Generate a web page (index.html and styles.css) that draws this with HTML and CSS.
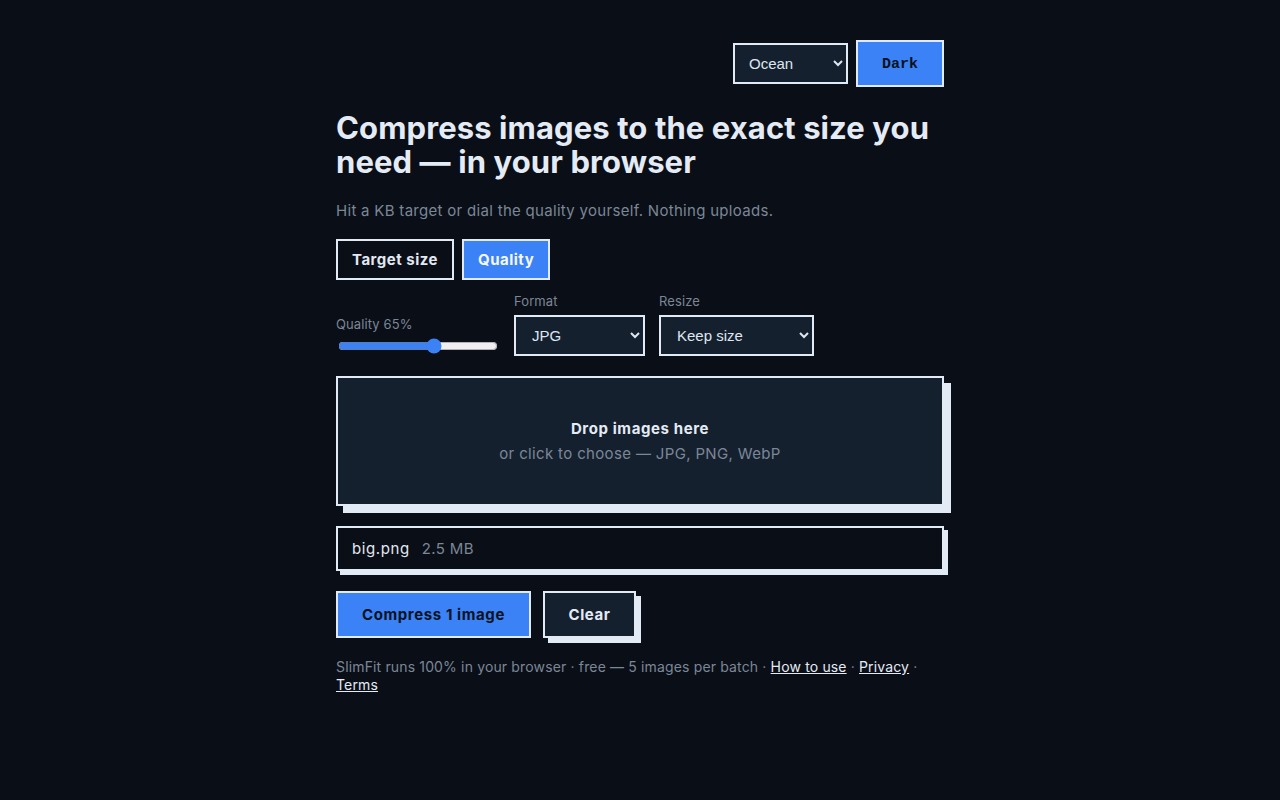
FILE: index.html
```html
<!DOCTYPE html>
<html lang="en">
<head>
    <meta charset="UTF-8">
    <meta name="viewport" content="width=device-width, initial-scale=1.0">
    <title>SlimFit — Compress images</title>
    <link rel="stylesheet" href="styles.css">
</head>
<body>
    <main class="wrap">
        <!-- Theme controls -->
        <div class="topbar">
            <select class="theme-select">
                <option>Ocean</option>
                <option>Forest</option>
                <option>Sunset</option>
            </select>
            <button class="theme-toggle" type="button">Dark</button>
        </div>

        <h1>Compress images to the exact size you need — in your browser</h1>
        <p class="lead">Hit a KB target or dial the quality yourself. Nothing uploads.</p>

        <div class="modes">
            <button class="mode" type="button">Target size</button>
            <button class="mode active" type="button">Quality</button>
        </div>

        <div class="controls">
            <div class="field">
                <label for="quality">Quality 65%</label>
                <input type="range" id="quality" min="10" max="100" value="65">
            </div>
            <div class="field">
                <label for="format">Format</label>
                <select id="format" class="pick format">
                    <option>JPG</option>
                    <option>PNG</option>
                    <option>WebP</option>
                </select>
            </div>
            <div class="field">
                <label for="resize">Resize</label>
                <select id="resize" class="pick resize">
                    <option>Keep size</option>
                    <option>Max 1920px</option>
                    <option>Max 1280px</option>
                </select>
            </div>
        </div>

        <div class="dropzone">
            <strong>Drop images here</strong>
            <span>or click to choose — JPG, PNG, WebP</span>
        </div>

        <div class="file-row">
            <span class="file-name">big.png</span>
            <span class="file-size">2.5 MB</span>
        </div>

        <div class="actions">
            <button class="btn primary" type="button">Compress 1 image</button>
            <button class="btn secondary" type="button">Clear</button>
        </div>

        <p class="footer">SlimFit runs 100% in your browser · free — 5 images per batch · <a href="#">How to use</a> · <a href="#">Privacy</a> · <a href="#">Terms</a></p>
    </main>
</body>
</html>
```

FILE: styles.css
```css
body {
    margin: 0;
    background-color: #0a0e16;
    color: #e2e9f3;
    font-family: Inter, "Noto Sans", sans-serif;
    letter-spacing: 0.35px;
}
.wrap {
    width: 608px;
    margin: 0 auto;
    padding-top: 40px;
}
.topbar {
    display: flex;
    justify-content: flex-end;
    align-items: center;
    gap: 8px;
}
.theme-select {
    width: 115px;
    height: 41px;
    padding: 0 10px;
    background-color: #15202e;
    color: #dfe6f0;
    border: 2px solid #e2eaf5;
    border-radius: 0;
    font-size: 15px;
}
.theme-toggle {
    width: 88px;
    height: 47px;
    padding-top: 2px;
    background-color: #3b82f6;
    color: #0b1220;
    border: 2px solid #e2eaf5;
    font-family: "Liberation Mono", monospace;
    font-weight: bold;
    font-size: 15px;
    letter-spacing: 0;
    cursor: pointer;
}
h1 {
    margin: 24px 0 0;
    font-size: 31px;
    line-height: 34px;
    font-weight: 700;
    letter-spacing: 0.1px;
    color: #e4ebf5;
}
.lead {
    margin: 22px 0 0;
    font-size: 15px;
    color: #7b8797;
    letter-spacing: 0.3px;
}
.modes {
    display: flex;
    gap: 8px;
    margin-top: 19px;
}
.mode {
    height: 41px;
    padding: 0 14px;
    background-color: #0a0e16;
    color: #e2e9f3;
    border: 2px solid #e2eaf5;
    font-family: inherit;
    font-weight: 700;
    font-size: 15px;
    letter-spacing: 0.5px;
    cursor: pointer;
}
.mode.active {
    background-color: #3b82f6;
    color: #f4f7fb;
}
.controls {
    display: flex;
    align-items: flex-end;
    gap: 14px;
    margin-top: 13px;
}
.field {
    display: flex;
    flex-direction: column;
    gap: 6px;
}
.field label {
    font-size: 13px;
    color: #7b8797;
    letter-spacing: 0.1px;
}
.field input[type="range"] {
    width: 160px;
    margin: 0 2px 2px 2px;
    accent-color: #3b82f6;
}
.pick {
    height: 41px;
    padding: 0 12px;
    background-color: #15202e;
    color: #dfe6f0;
    border: 2px solid #e2eaf5;
    border-radius: 0;
    font-size: 15px;
}
.format {
    width: 131px;
}
.resize {
    width: 155px;
}
.dropzone {
    height: 126px;
    margin-top: 20px;
    display: flex;
    flex-direction: column;
    align-items: center;
    justify-content: center;
    gap: 6px;
    background-color: #15202e;
    border: 2px solid #e2eaf5;
    box-shadow: 7px 7px 0 #e2eaf5;
    font-size: 15px;
    cursor: pointer;
}
.dropzone strong {
    color: #e4ebf5;
    letter-spacing: 0.6px;
}
.dropzone span {
    color: #7b8797;
}
.file-row {
    height: 41px;
    margin-top: 20px;
    padding: 0 14px;
    display: flex;
    align-items: center;
    gap: 12px;
    background-color: #0a0e16;
    border: 2px solid #e2eaf5;
    box-shadow: 4px 4px 0 #e2eaf5;
    font-size: 15px;
}
.file-name {
    letter-spacing: 0.6px;
}
.file-size {
    color: #7b8797;
}
.actions {
    display: flex;
    gap: 12px;
    margin-top: 20px;
}
.btn {
    height: 47px;
    border: 2px solid #e2eaf5;
    font-family: inherit;
    font-weight: 700;
    font-size: 15px;
    letter-spacing: 0.6px;
    cursor: pointer;
}
.primary {
    width: 195px;
    background-color: #3b82f6;
    color: #0b1220;
}
.secondary {
    width: 93px;
    background-color: #15202e;
    color: #e4ebf5;
    box-shadow: 5px 5px 0 #e2eaf5;
}
.footer {
    margin: 20px 0 0;
    font-size: 14px;
    line-height: 18px;
    color: #7b8797;
    letter-spacing: 0.15px;
}
.footer a {
    color: #e4ebf5;
}
```
